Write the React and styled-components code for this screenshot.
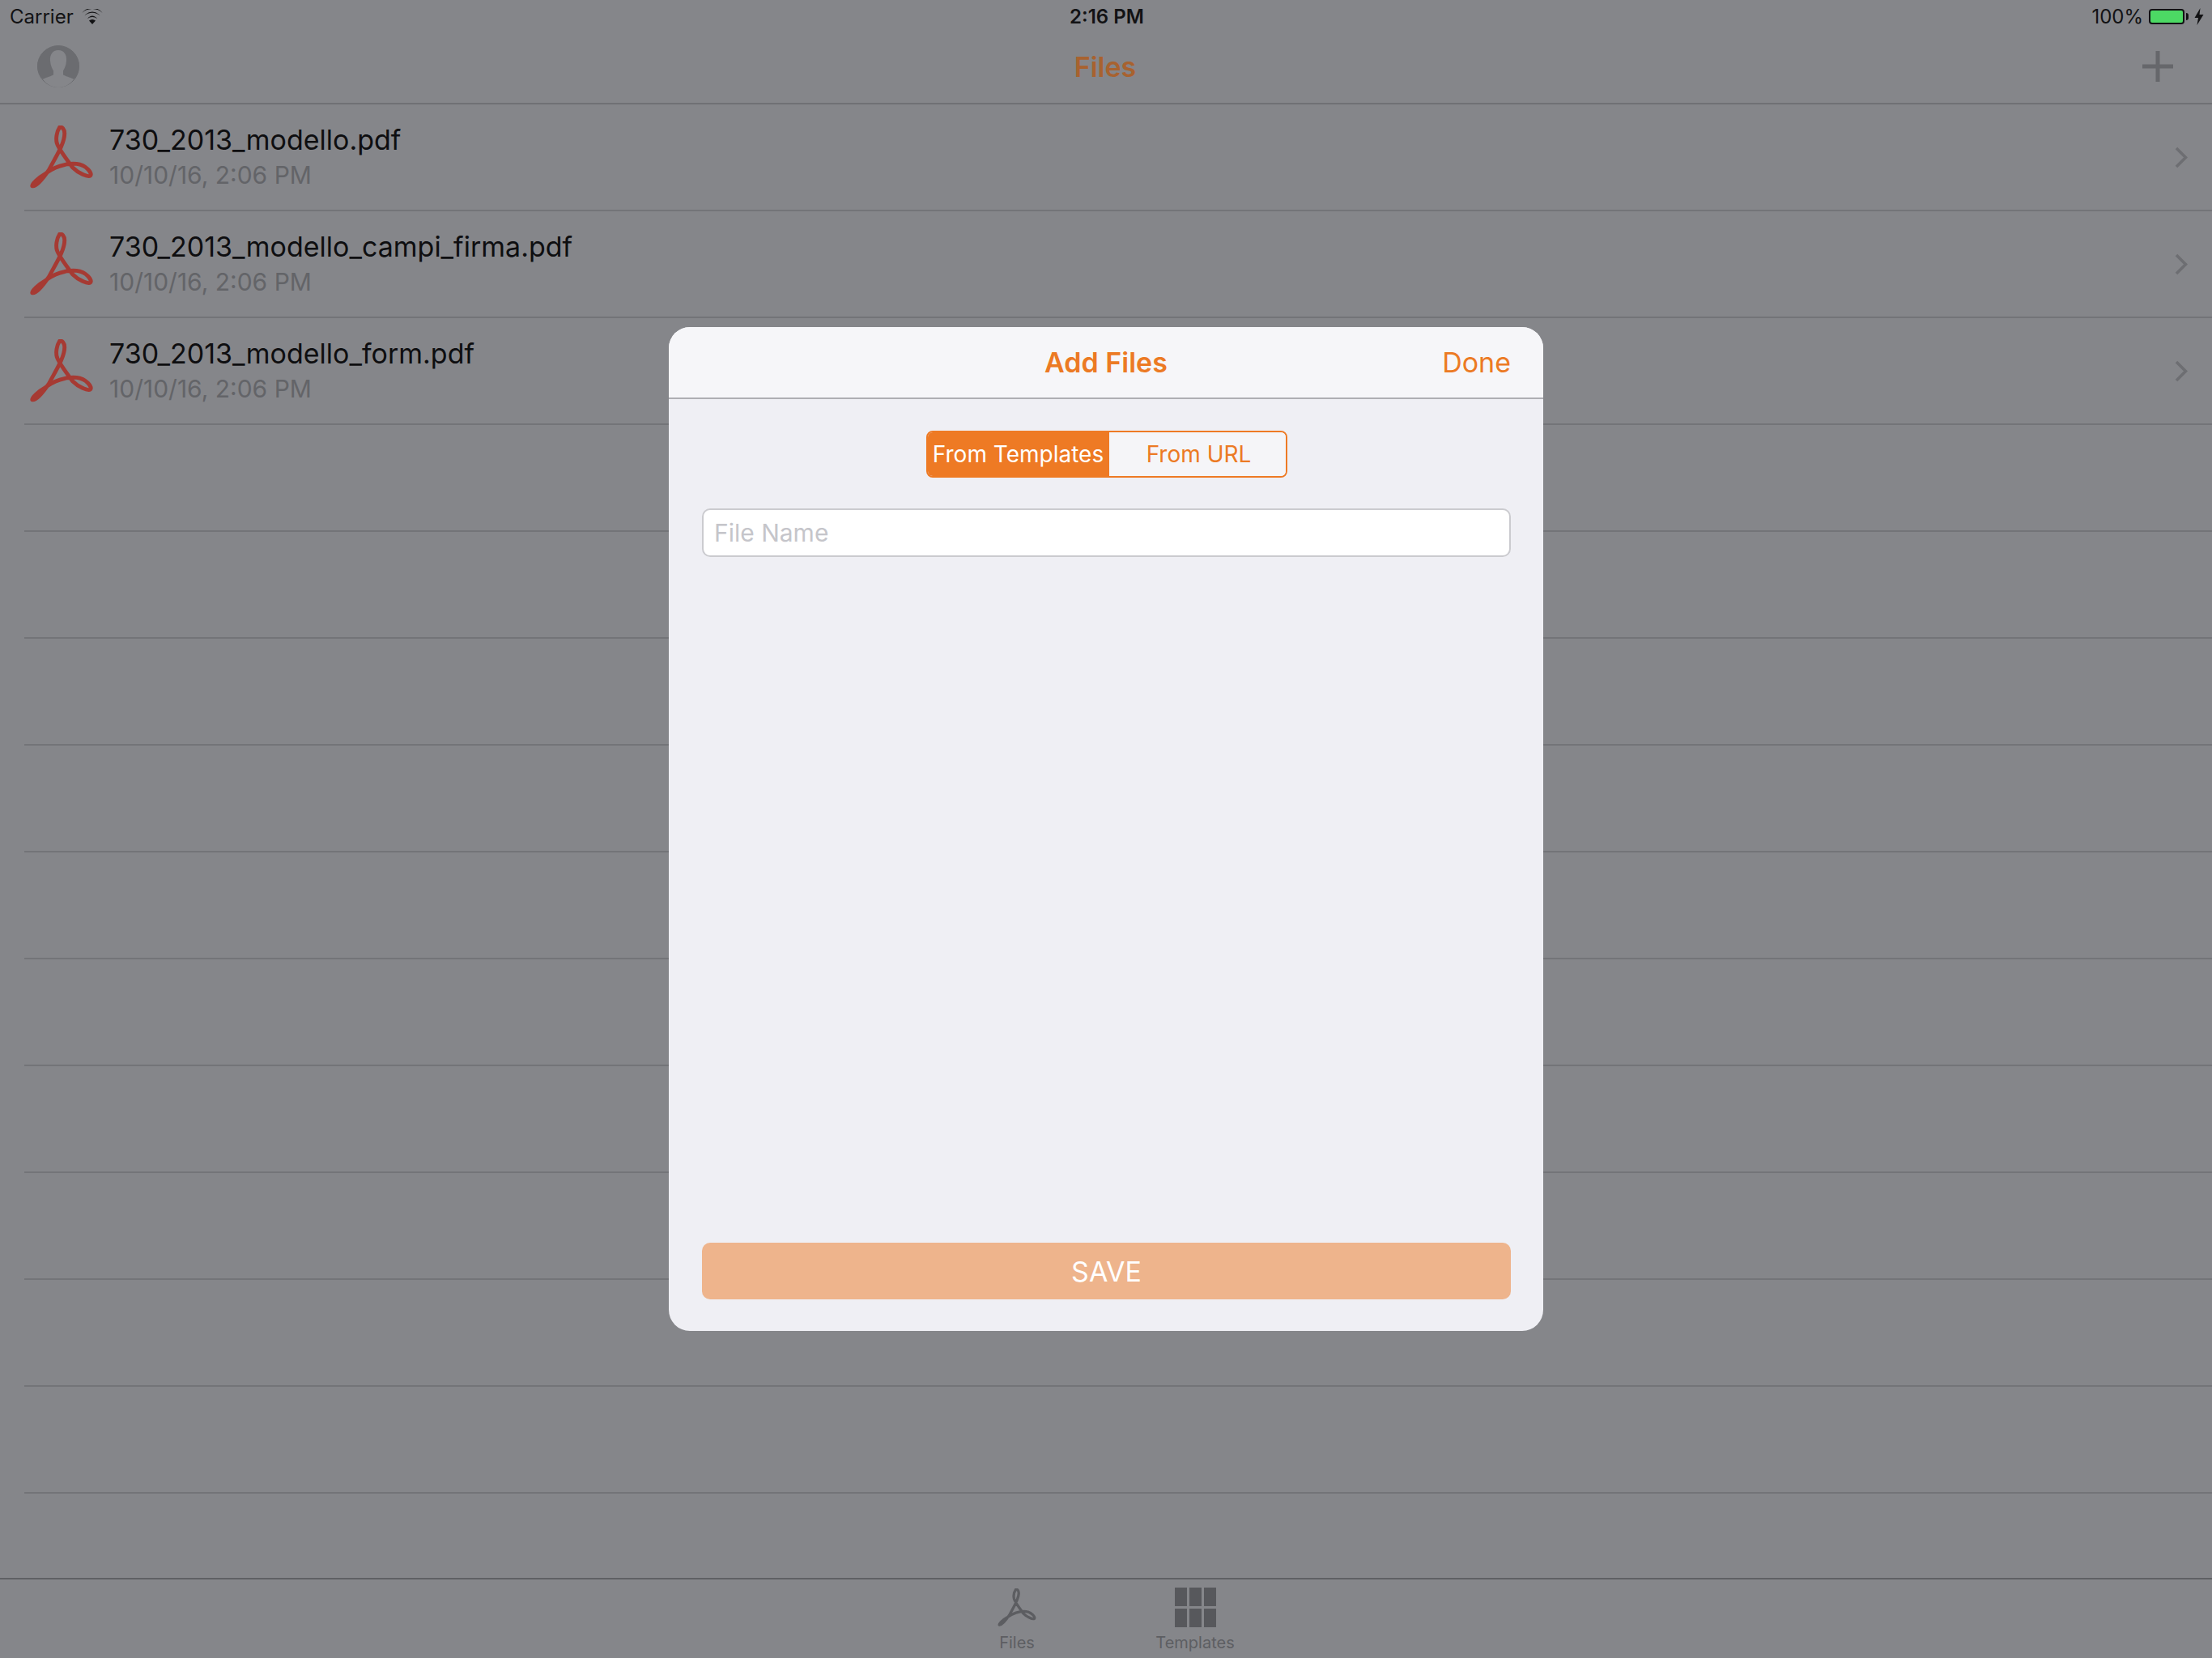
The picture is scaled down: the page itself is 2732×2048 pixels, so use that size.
import React from "react";
import styled, { createGlobalStyle } from "styled-components";

const Global = createGlobalStyle`
  html, body { margin: 0; padding: 0; background: #85868a; }
  * { box-sizing: border-box; }
  body { font-family: Inter, "Noto Sans", "Liberation Sans", sans-serif; }
`;

const Screen = styled.div`
  position: relative;
  width: 2732px;
  height: 2048px;
  background: #85868a;
  display: flex;
  flex-direction: column;
  overflow: hidden;
`;

const TopBars = styled.header`
  height: 129px;
  border-bottom: 2px solid #6f7074;
  display: flex;
  flex-direction: column;
`;

const StatusBar = styled.div`
  height: 40px;
  padding: 0 10px 0 12px;
  display: grid;
  grid-template-columns: 1fr auto 1fr;
  align-items: center;
  font-size: 24px;
  color: #121214;
`;

const StatusLeft = styled.div`
  display: flex;
  align-items: center;
  gap: 10px;
`;

const StatusTime = styled.div`
  font-weight: 600;
`;

const StatusRight = styled.div`
  display: flex;
  align-items: center;
  justify-content: flex-end;
  gap: 7px;
`;

const Battery = styled.div`
  width: 44px;
  height: 19px;
  border: 2px solid #121214;
  border-radius: 4px;
  background: #4cd964;
  position: relative;
  margin-right: 5px;
  &::after {
    content: "";
    position: absolute;
    right: -7px;
    top: 3px;
    width: 3px;
    height: 9px;
    background: #121214;
    border-radius: 0 3px 3px 0;
  }
`;

const NavBar = styled.nav`
  flex: 1;
  padding: 0 48px 3px 46px;
  display: grid;
  grid-template-columns: 1fr auto 1fr;
  align-items: center;
`;

const NavTitle = styled.h1`
  margin: 0;
  font-size: 34px;
  font-weight: 600;
  color: #a8622f;
`;

const NavPlus = styled.div`
  justify-self: end;
  display: flex;
`;

const List = styled.main`
  flex: 1;
  display: flex;
  flex-direction: column;
`;

const Row = styled.div`
  height: 132px;
  flex: none;
  margin-left: 30px;
  padding: 0 30px 0 5px;
  border-bottom: 2px solid #737478;
  display: flex;
  align-items: center;
  gap: 18px;
`;

const RowInfo = styled.div`
  flex: 1;
`;

const RowName = styled.div`
  font-size: 34px;
  line-height: 44px;
  color: #0e0e10;
`;

const RowDate = styled.div`
  font-size: 30px;
  line-height: 42px;
  color: #636468;
`;

const TabBar = styled.footer`
  height: 99px;
  flex: none;
  border-top: 2px solid #5f6064;
  display: grid;
  grid-template-columns: 220px 220px;
  justify-content: center;
`;

const Tab = styled.div`
  display: flex;
  flex-direction: column;
  align-items: center;
  padding-top: 9px;
`;

const TabIcon = styled.div`
  height: 50px;
  display: flex;
  align-items: center;
`;

const TabLabel = styled.div`
  font-size: 20px;
  line-height: 24px;
  margin-top: 7px;
  color: #5d5e62;
`;

const GridIcon = styled.div`
  display: grid;
  grid-template-columns: repeat(3, 15px);
  grid-template-rows: repeat(2, 23px);
  gap: 3px;
  span { background: #57585c; }
`;

const ModalLayer = styled.div`
  position: absolute;
  inset: 0;
  display: flex;
  align-items: center;
  justify-content: center;
`;

const Modal = styled.section`
  width: 1080px;
  height: 1240px;
  border-radius: 26px;
  background: #efeff4;
  display: flex;
  flex-direction: column;
  overflow: hidden;
`;

const ModalHeader = styled.div`
  height: 89px;
  flex: none;
  padding: 0 40px;
  background: #f6f6f9;
  border-bottom: 2px solid #aeaeb3;
  display: grid;
  grid-template-columns: 1fr auto 1fr;
  align-items: center;
  color: #ec7a24;
  font-size: 34px;
`;

const ModalTitle = styled.div`
  grid-column: 2;
  font-weight: 600;
`;

const Done = styled.div`
  justify-self: end;
`;

const ModalBody = styled.div`
  flex: 1;
  padding: 39px 40px 39px 41px;
  display: flex;
  flex-direction: column;
  align-items: stretch;
`;

const Segments = styled.div`
  align-self: center;
  width: 446px;
  height: 58px;
  display: grid;
  grid-template-columns: 224px 222px;
  border: 2px solid #ee7a24;
  border-radius: 8px;
  overflow: hidden;
`;

const Segment = styled.div`
  display: flex;
  align-items: center;
  justify-content: center;
  font-size: 28px;
  background: ${(p) => (p.$active ? "#ee7a24" : "#f5f5f8")};
  color: ${(p) => (p.$active ? "#ffffff" : "#ec7a24")};
`;

const NameField = styled.div`
  height: 60px;
  margin-top: 38px;
  padding: 0 13px;
  background: #ffffff;
  border: 2px solid #cbcbcf;
  border-radius: 10px;
  display: flex;
  align-items: center;
  font-size: 30px;
  color: #c5c5ca;
`;

const SaveButton = styled.div`
  margin-top: auto;
  height: 70px;
  border-radius: 10px;
  background: #eeb48c;
  color: #ffffff;
  font-size: 34px;
  display: flex;
  align-items: center;
  justify-content: center;
`;

const Wifi = () => (
  <svg width="26" height="19" viewBox="0 0 26 19">
    <path d="M13 19 L9 14.6 A6 6 0 0 1 17 14.6 Z" fill="#121214" />
    <path d="M6.9 12.2 A9.2 9.2 0 0 1 19.1 12.2 L17.4 10.3 A7 7 0 0 0 8.6 10.3 Z M6.9 12.2 L8.6 10.3" fill="#121214" />
    <path d="M3.5 8.4 A14 14 0 0 1 22.5 8.4 L20.8 6.5 A11.5 11.5 0 0 0 5.2 6.5 Z" fill="#121214" />
    <path d="M0.4 4.9 A18.6 18.6 0 0 1 25.6 4.9 L23.9 3 A16 16 0 0 0 2.1 3 Z" fill="#121214" />
  </svg>
);

const Bolt = () => (
  <svg width="12" height="21" viewBox="0 0 12 21">
    <path d="M7.5 0 L0.5 12 L5 12 L3.5 21 L11.5 8 L6.5 8 Z" fill="#121214" />
  </svg>
);

const Avatar = () => (
  <svg width="52" height="52" viewBox="0 0 52 52">
    <circle cx="26" cy="26" r="26" fill="#85868a" />
    <circle cx="26" cy="26" r="25.5" fill="none" stroke="#6b6c70" strokeWidth="1" />
    <ellipse cx="26" cy="25.5" rx="25.8" ry="25" fill="#6b6c70" />
    <path
      d="M26 6 C18.5 6 15.5 12 16 19 C16.4 25 18.5 29 20 31.5 L20 36.5 C15 39 9.5 40 6.8 42 C12 48.5 18.5 52 26 52 C33.5 52 40 48.5 45.2 42 C42.5 40 37 39 32 36.5 L32 31.5 C33.5 29 35.6 25 36 19 C36.5 12 33.5 6 26 6 Z"
      fill="#85868a"
    />
  </svg>
);

const Plus = () => (
  <svg width="38" height="38" viewBox="0 0 38 38">
    <path d="M19 0 V38 M0 19 H38" stroke="#66676b" strokeWidth="5" fill="none" />
  </svg>
);

const Chevron = () => (
  <svg width="16" height="27" viewBox="0 0 16 27">
    <path d="M2 2 L13.5 13.5 L2 25" stroke="#6d6e72" strokeWidth="3.6" fill="none" />
  </svg>
);

const acrobat =
  "M115 7 C104 24 100 50 105 68 C113 92 135 120 165 160 C185 180 222 198 232 191 C240 181 216 150 180 146 C140 141 90 160 60 184 C35 198 10 222 11 230 C22 235 50 205 75 168 C100 120 134 70 134 30 C134 15 125 4 115 7 Z";

const PdfIcon = ({ color, width, height, weight }) => (
  <svg width={width} height={height} viewBox="0 0 245 240">
    <path d={acrobat} fill="none" stroke={color} strokeWidth={weight} strokeLinejoin="round" />
  </svg>
);

const files = [
  { name: "730_2013_modello.pdf", date: "10/10/16, 2:06 PM" },
  { name: "730_2013_modello_campi_firma.pdf", date: "10/10/16, 2:06 PM" },
  { name: "730_2013_modello_form.pdf", date: "10/10/16, 2:06 PM" },
];

export default function App() {
  return (
    <>
      <Global />
      <Screen>
        <TopBars>
          <StatusBar>
            <StatusLeft>
              Carrier
              <Wifi />
            </StatusLeft>
            <StatusTime>2:16 PM</StatusTime>
            <StatusRight>
              100%
              <Battery />
              <Bolt />
            </StatusRight>
          </StatusBar>
          <NavBar>
            <Avatar />
            <NavTitle>Files</NavTitle>
            <NavPlus>
              <Plus />
            </NavPlus>
          </NavBar>
        </TopBars>
        <List>
          {files.map((f) => (
            <Row key={f.name}>
              <PdfIcon color="#a63a33" width={82} height={78} weight={15} />
              <RowInfo>
                <RowName>{f.name}</RowName>
                <RowDate>{f.date}</RowDate>
              </RowInfo>
              <Chevron />
            </Row>
          ))}
          {Array.from({ length: 10 }, (_, i) => (
            <Row key={i} />
          ))}
        </List>
        <TabBar>
          <Tab>
            <TabIcon>
              <PdfIcon color="#5c5d61" width={48} height={47} weight={17} />
            </TabIcon>
            <TabLabel>Files</TabLabel>
          </Tab>
          <Tab>
            <TabIcon>
              <GridIcon>
                {Array.from({ length: 6 }, (_, i) => (
                  <span key={i} />
                ))}
              </GridIcon>
            </TabIcon>
            <TabLabel>Templates</TabLabel>
          </Tab>
        </TabBar>
        <ModalLayer>
          <Modal>
            <ModalHeader>
              <ModalTitle>Add Files</ModalTitle>
              <Done>Done</Done>
            </ModalHeader>
            <ModalBody>
              <Segments>
                <Segment $active>From Templates</Segment>
                <Segment>From URL</Segment>
              </Segments>
              <NameField>File Name</NameField>
              <SaveButton>SAVE</SaveButton>
            </ModalBody>
          </Modal>
        </ModalLayer>
      </Screen>
    </>
  );
}
